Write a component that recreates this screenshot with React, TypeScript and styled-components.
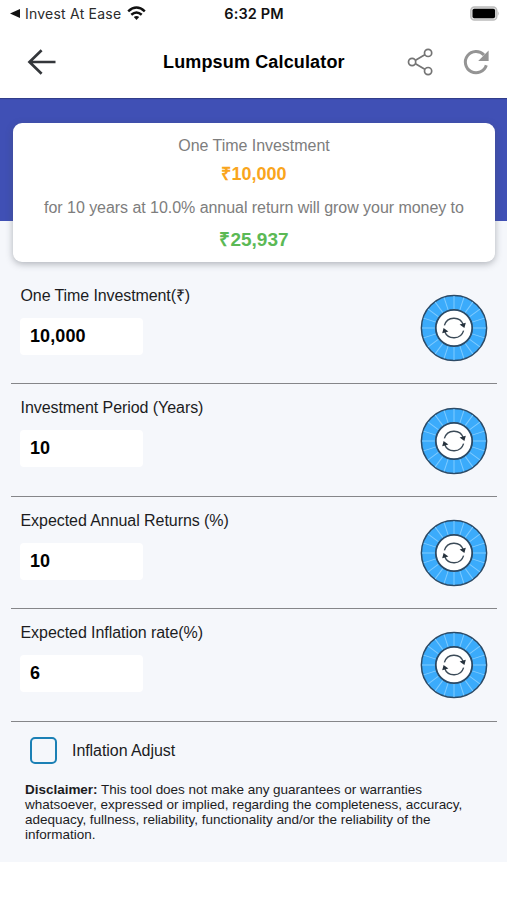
import React from "react";
import styled, { createGlobalStyle } from "styled-components";

const GlobalStyle = createGlobalStyle`
  *, *::before, *::after { box-sizing: border-box; }
  body { margin: 0; background: #fff; }
`;

const Screen = styled.div`
  display: flex;
  flex-direction: column;
  width: 507px;
  height: 900px;
  overflow: hidden;
  background: #fff;
  color: #111;
  font-family: "Liberation Sans", Arial, sans-serif;
`;

const StatusBar = styled.div`
  display: grid;
  grid-template-columns: 1fr auto 1fr;
  align-items: center;
  height: 28px;
  padding: 0 8px 2px 10px;
  font-family: Inter, "Liberation Sans", sans-serif;
  color: #111;
`;

const BackToApp = styled.div`
  display: flex;
  align-items: center;
  gap: 5px;
  font-size: 14px;
  letter-spacing: 0.22px;
  color: #2b2b2b;
  white-space: nowrap;
`;

const WifiSlot = styled.span`
  display: flex;
  margin-left: 1px;
`;

const Clock = styled.div`
  margin-right: 1px;
  font-size: 14.5px;
  font-weight: 600;
  letter-spacing: 0.15px;
`;

const BatterySlot = styled.div`
  display: flex;
  justify-content: flex-end;
`;

const Header = styled.header`
  display: flex;
  align-items: center;
  height: 70px;
  padding: 0 15px 2px 25px;
`;

const IconButton = styled.button<{ $gap?: number }>`
  display: flex;
  align-items: center;
  justify-content: center;
  width: 32px;
  height: 32px;
  margin: 0 0 0 ${(p) => p.$gap ?? 0}px;
  padding: 0;
  border: 0;
  background: none;
`;

const Title = styled.h1`
  flex: 1;
  margin: 0 0 0 106px;
  font-size: 18px;
  font-weight: 700;
  letter-spacing: 0.15px;
  line-height: 24px;
  color: #000;
  white-space: nowrap;
`;

const Body = styled.main`
  height: 764px;
  background: #f5f7fb;
`;

const Hero = styled.section`
  height: 123px;
  padding: 25px 12px 0 13px;
  background: #4050b5;
  box-shadow: inset 0 2px 1px -1px #303b86;
`;

const SummaryCard = styled.div`
  display: flex;
  flex-direction: column;
  align-items: center;
  height: 139px;
  padding-top: 11px;
  border-radius: 9px;
  background: #fff;
  box-shadow: 0 2px 7px rgba(70, 75, 85, 0.4);
`;

const Caption = styled.p<{ $spacing?: number }>`
  margin: 0;
  font-size: 16px;
  line-height: 24px;
  letter-spacing: ${(p) => p.$spacing ?? 0}px;
  color: #7d7d7d;
  white-space: nowrap;
`;

const Amount = styled.strong<{ $tone: string; $size: number; $top: number; $bottom?: number }>`
  margin-top: ${(p) => p.$top}px;
  margin-bottom: ${(p) => p.$bottom ?? 0}px;
  font-size: ${(p) => p.$size}px;
  line-height: 24px;
  color: ${(p) => p.$tone};
`;

const Fields = styled.section`
  margin: 51px 10px 0 11px;
`;

const FieldRow = styled.div`
  display: flex;
  justify-content: space-between;
  height: 112.4px;
  padding: 13px 9px 0;
  border-bottom: 1px solid #858689;
`;

const Field = styled.label`
  display: flex;
  flex-direction: column;
  gap: 12px;
`;

const FieldLabel = styled.span<{ $spacing?: number }>`
  font-size: 16px;
  line-height: 21px;
  letter-spacing: ${(p) => p.$spacing ?? 0}px;
  color: #1c1c1e;
  white-space: nowrap;
`;

const FieldCaption = styled(FieldLabel)`
  padding-left: 0.5px;
`;

const FieldInput = styled.input`
  width: 123px;
  height: 37px;
  padding: 0 10px;
  border: 0;
  border-radius: 4px;
  outline: none;
  background: #fff;
  color: #000;
  font: 700 18px "Liberation Sans", Arial, sans-serif;
  letter-spacing: 0.1px;
`;

const DialSlot = styled.div`
  margin-top: 9.2px;
  height: 68px;
`;

const CheckRow = styled.div`
  display: flex;
  align-items: center;
  gap: 15px;
  height: 27px;
  margin: 15px 0 0 30px;
`;

const CheckBox = styled.span`
  width: 27px;
  height: 27px;
  border: 2px solid #1b80b5;
  border-radius: 5px;
`;

const Disclaimer = styled.p`
  margin: 18px 25px 0;
  font-size: 13.5px;
  line-height: 15.3px;
  color: #1c1c1e;
`;

const DisclaimerLine = styled.span<{ $spacing: number }>`
  display: block;
  white-space: nowrap;
  letter-spacing: ${(p) => p.$spacing}px;
`;

const TICKS = Array.from({ length: 20 }, (_, i) => i * 18);

function Dial() {
  return (
    <svg width="68" height="68" viewBox="-34 -34 68 68">
      <circle r="32.6" fill="#3babfb" stroke="#2b4a66" strokeWidth="1.5" />
      {TICKS.map((angle) => (
        <path
          key={angle}
          d="M0 -19V-32"
          stroke="#7fcbff"
          strokeWidth="1"
          transform={`rotate(${angle})`}
        />
      ))}
      <circle r="18.2" fill="#fff" stroke="#2b4a66" strokeWidth="1.8" />
      <g fill="none" stroke="#3c4b58" strokeWidth="1.4">
        <path d="M-9.6 -2.6A10 10 0 0 1 9.4 -3.2" />
        <path d="M9.6 2.6A10 10 0 0 1 -9.4 3.2" />
      </g>
      <path d="M5.6 -3.4L11.8 -5.2L10.4 0Z M-5.6 3.4L-11.8 5.2L-10.4 0Z" fill="#26323d" />
    </svg>
  );
}

function WifiIcon() {
  return (
    <svg width="19" height="15" viewBox="0 0 19 15" fill="none" stroke="#111" strokeWidth="2.5">
      <path d="M1.2 5.3Q9.5 -2.3 17.8 5.3" />
      <path d="M4.3 8.8Q9.5 4.3 14.7 8.8" />
      <path d="M6.8 11.1Q9.5 8.9 12.2 11.1L9.5 14Z" fill="#111" stroke="none" />
    </svg>
  );
}

const FIELDS = [
  { label: "One Time Investment(₹)", value: "10,000", spacing: -0.1 },
  { label: "Investment Period (Years)", value: "10", spacing: -0.06 },
  { label: "Expected Annual Returns (%)", value: "10", spacing: -0.06 },
  { label: "Expected Inflation rate(%)", value: "6", spacing: -0.06 },
];

export default function App() {
  return (
    <Screen>
      <GlobalStyle />
      <StatusBar>
        <BackToApp>
          <svg width="10" height="9" viewBox="0 0 10 9">
            <path d="M0 4.5L10 0V9Z" fill="#111" />
          </svg>
          <span>Invest At Ease</span>
          <WifiSlot>
            <WifiIcon />
          </WifiSlot>
        </BackToApp>
        <Clock>6:32 PM</Clock>
        <BatterySlot>
          <svg width="30" height="15" viewBox="0 0 30 15">
            <rect x="1.8" y="1" width="26" height="13" rx="3.6" fill="#e0e0e0" stroke="#bcbcbc" strokeWidth="1.4" />
            <rect x="3.5" y="2.7" width="22.6" height="9.6" rx="1.8" fill="#000" />
            <path d="M28.8 5Q30.3 7.5 28.8 10Z" fill="#aaa" />
          </svg>
        </BatterySlot>
      </StatusBar>

      <Header>
        <IconButton aria-label="Back">
          <svg width="32" height="32" viewBox="0 0 32 32" fill="none" stroke="#34373b" strokeWidth="2.7">
            <path d="M30.5 16H4.5M16.6 4.3L4.5 16L16.6 27.7" />
          </svg>
        </IconButton>
        <Title>Lumpsum Calculator</Title>
        <IconButton aria-label="Share">
          <svg width="32" height="32" viewBox="0 0 32 32" fill="none" stroke="#747474" strokeWidth="1.7">
            <path d="M11.5 14.2L20.8 8.8M11.5 17.8L20.8 23.3" />
            <circle cx="8.1" cy="16" r="3.6" />
            <circle cx="24.1" cy="6.9" r="3.6" />
            <circle cx="24.1" cy="25.1" r="3.6" />
          </svg>
        </IconButton>
        <IconButton aria-label="Reset" $gap={24}>
          <svg width="32" height="32" viewBox="0 0 32 32">
            <path d="M24 8.9A10.7 10.7 0 1 0 26.3 19.2" fill="none" stroke="#949494" strokeWidth="3" />
            <path d="M28.6 4.5V15H18.2Z" fill="#949494" />
          </svg>
        </IconButton>
      </Header>

      <Body>
        <Hero>
          <SummaryCard>
            <Caption $spacing={-0.04}>One Time Investment</Caption>
            <Amount $tone="#f9a51d" $size={18} $top={4} $bottom={10}>₹10,000</Amount>
            <Caption $spacing={-0.045}>for 10 years at 10.0% annual return will grow your money to</Caption>
            <Amount $tone="#5bb955" $size={19} $top={8}>₹25,937</Amount>
          </SummaryCard>
        </Hero>

        <Fields>
          {FIELDS.map((field) => (
            <FieldRow key={field.label}>
              <Field>
                <FieldCaption $spacing={field.spacing}>{field.label}</FieldCaption>
                <FieldInput defaultValue={field.value} />
              </Field>
              <DialSlot>
                <Dial />
              </DialSlot>
            </FieldRow>
          ))}
        </Fields>

        <CheckRow>
          <CheckBox role="checkbox" aria-checked="false" />
          <FieldLabel $spacing={-0.06}>Inflation Adjust</FieldLabel>
        </CheckRow>

        <Disclaimer>
          <DisclaimerLine $spacing={-0.02}>
            <b>Disclaimer:</b> This tool does not make any guarantees or warranties
          </DisclaimerLine>
          <DisclaimerLine $spacing={-0.02}>
            whatsoever, expressed or implied, regarding the completeness, accuracy,
          </DisclaimerLine>
          <DisclaimerLine $spacing={-0.02}>
            adequacy, fullness, reliability, functionality and/or the reliability of the
          </DisclaimerLine>
          <DisclaimerLine $spacing={0}>information.</DisclaimerLine>
        </Disclaimer>
      </Body>
    </Screen>
  );
}
